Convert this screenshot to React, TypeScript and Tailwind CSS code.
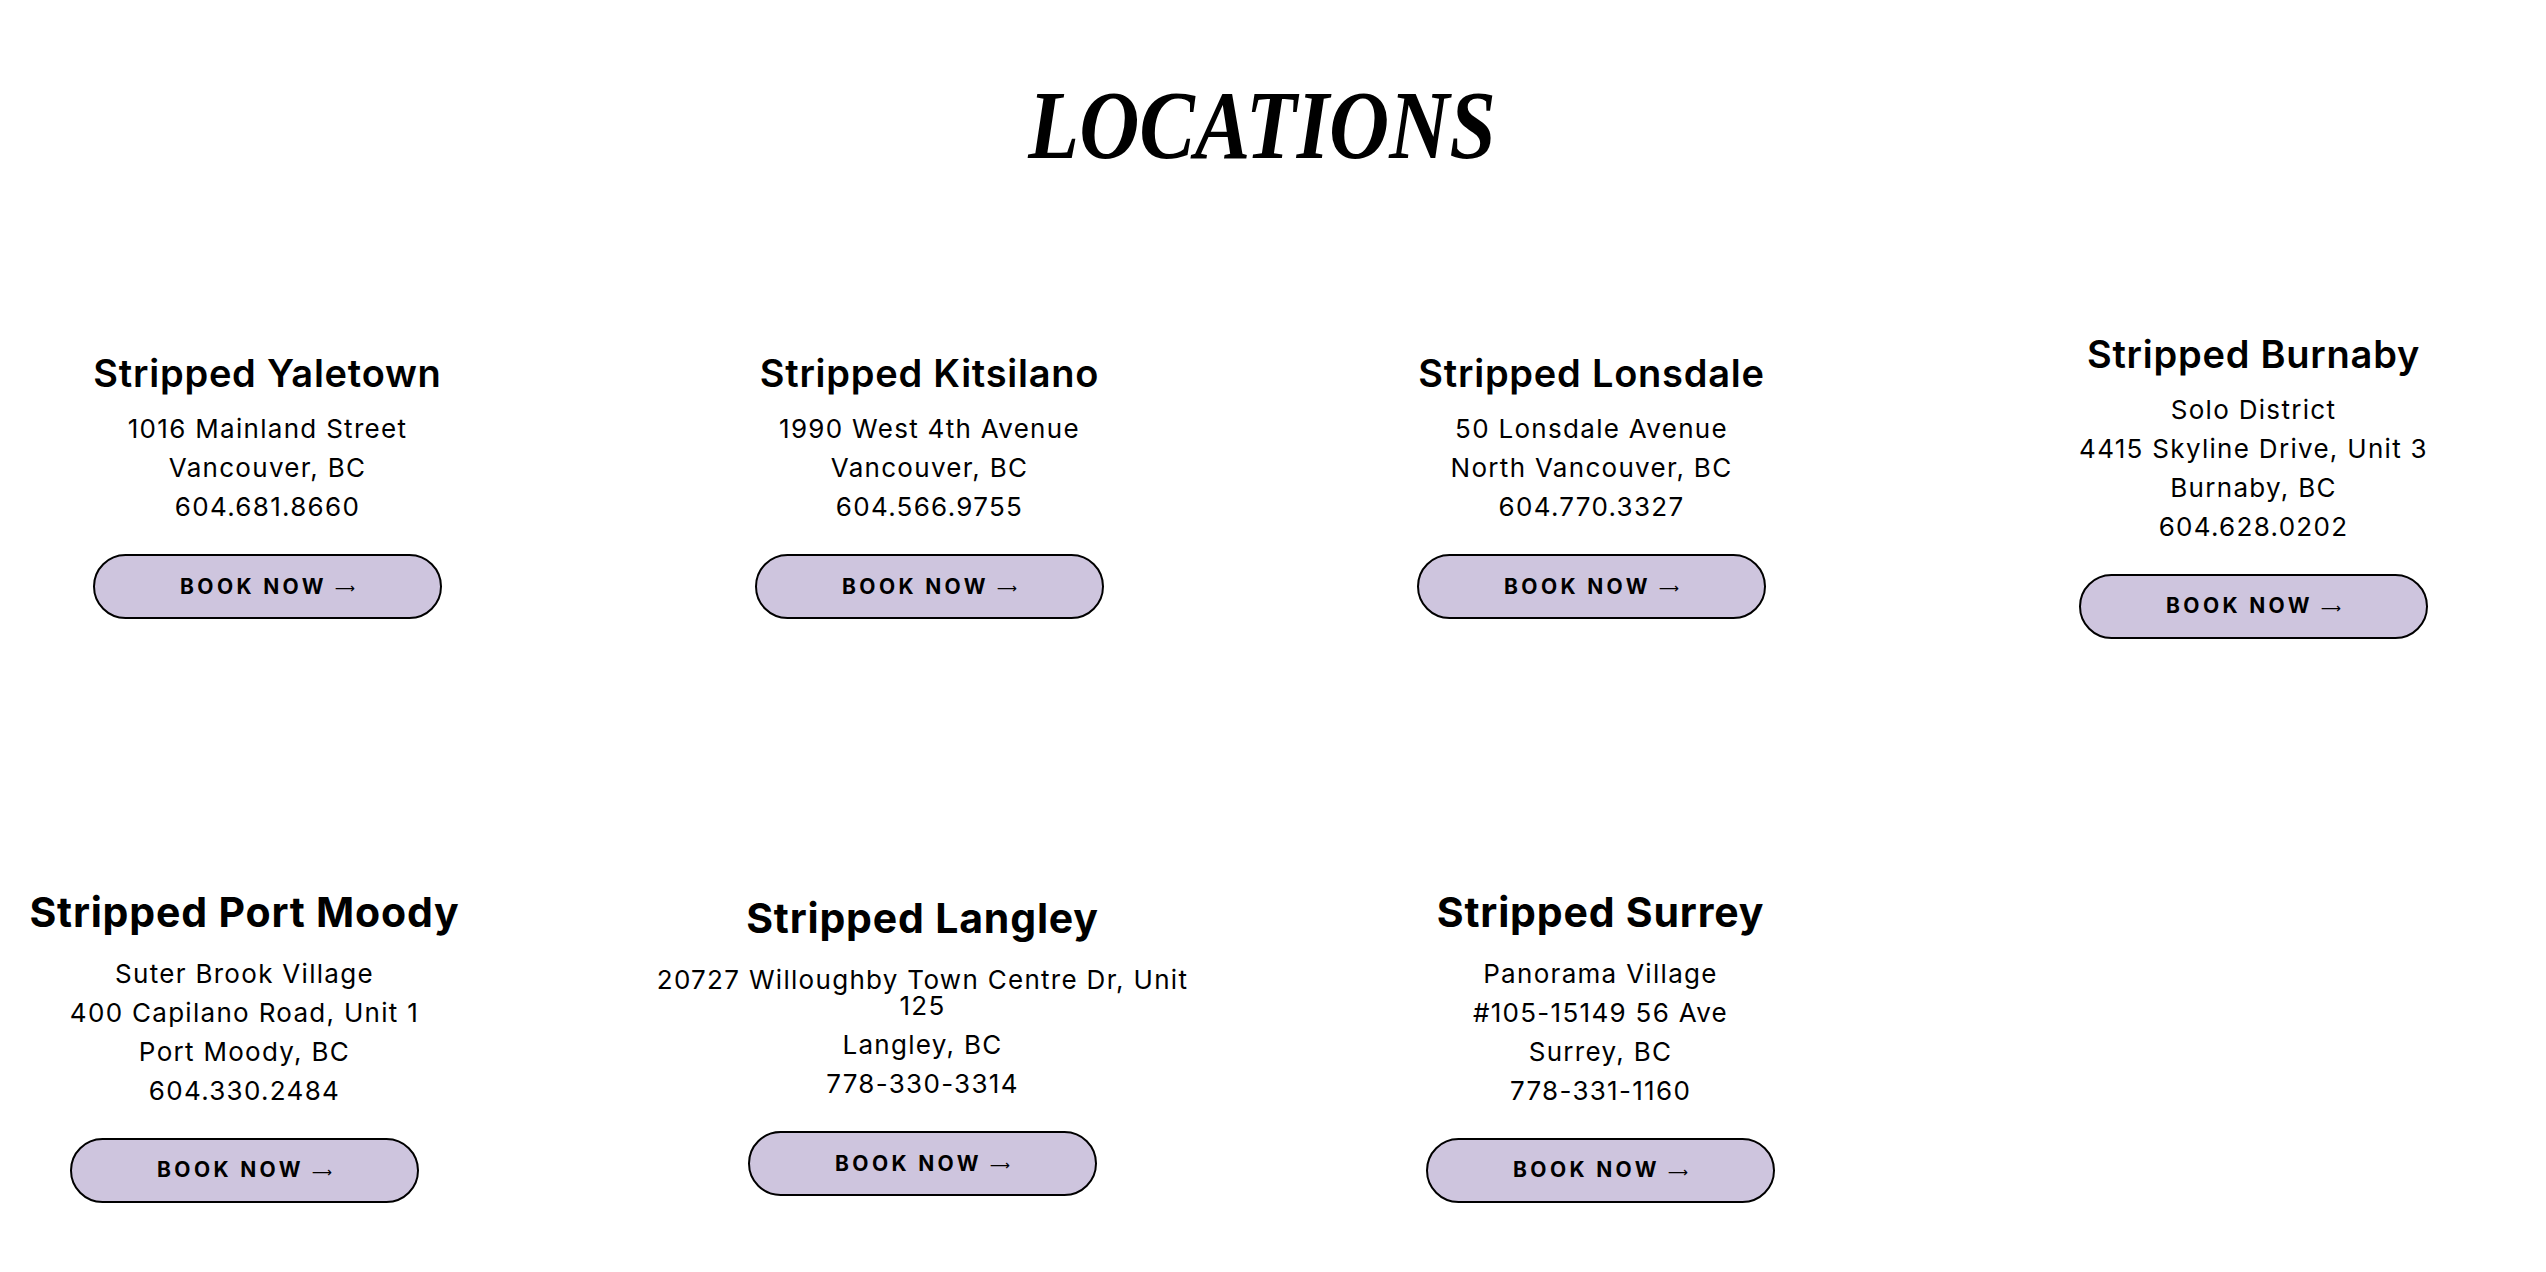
import { ReactNode } from 'react';

type Location = {
  name: string;
  lines: string[];
};

const topRow: Location[] = [
  { name: 'Stripped Yaletown', lines: ['1016 Mainland Street', 'Vancouver, BC', '604.681.8660'] },
  { name: 'Stripped Kitsilano', lines: ['1990 West 4th Avenue', 'Vancouver, BC', '604.566.9755'] },
  { name: 'Stripped Lonsdale', lines: ['50 Lonsdale Avenue', 'North Vancouver, BC', '604.770.3327'] },
  {
    name: 'Stripped Burnaby',
    lines: ['Solo District', '4415 Skyline Drive, Unit 3', 'Burnaby, BC', '604.628.0202'],
  },
];

const bottomRow: Location[] = [
  {
    name: 'Stripped Port Moody',
    lines: ['Suter Brook Village', '400 Capilano Road, Unit 1', 'Port Moody, BC', '604.330.2484'],
  },
  {
    name: 'Stripped Langley',
    lines: ['20727 Willoughby Town Centre Dr, Unit 125', 'Langley, BC', '778-330-3314'],
  },
  {
    name: 'Stripped Surrey',
    lines: ['Panorama Village', '#105-15149 56 Ave', 'Surrey, BC', '778-331-1160'],
  },
];

function BookButton() {
  return (
    <button className="mt-[34px] flex h-[65px] w-[349px] items-center justify-center gap-2 rounded-full border-2 border-black bg-[#cec5de] text-[21px] font-bold uppercase tracking-[0.16em] text-black">
      <span>Book Now</span>
      <span className="mt-1 font-['DejaVu_Sans',sans-serif] text-[14px] font-normal tracking-normal">⟶</span>
    </button>
  );
}

function Card({ loc, wide, children }: { loc: Location; wide?: boolean; children?: ReactNode }) {
  return (
    <div
      className={
        wide
          ? 'flex h-[499px] w-[637px] shrink-0 flex-col items-center justify-center rounded-2xl bg-white px-12 pt-[19px]'
          : 'flex h-[499px] w-[621px] shrink-0 flex-col items-center justify-center rounded-2xl bg-white px-12 pt-[18px]'
      }
    >
      <h3
        className={
          wide
            ? 'text-center text-[41px] font-bold leading-[48px] tracking-[0.02em]'
            : 'text-center text-[38px] font-semibold leading-[46px] tracking-[0.02em]'
        }
      >
        {loc.name}
      </h3>
      <div
        className={
          wide
            ? 'mt-[25px] flex max-w-[540px] flex-col gap-[13px] text-center text-[26px] leading-[26px] tracking-[0.05em]'
            : 'mt-5 flex max-w-[540px] flex-col gap-[13px] text-center text-[26px] leading-[26px] tracking-[0.05em]'
        }
      >
        {loc.lines.map((line) => (
          <p key={line}>{line}</p>
        ))}
      </div>
      {children}
      <BookButton />
    </div>
  );
}

export default function App() {
  return (
    <div className="h-screen overflow-hidden bg-white font-['Inter',sans-serif] text-black">
      <h2 className="pt-[76px] pr-[22px] text-center font-['Liberation_Serif',serif] text-[98px] font-bold italic leading-none">
        <span className="inline-block scale-x-[0.85]">LOCATIONS</span>
      </h2>

      <div className="mt-[52px] flex flex-col gap-[61px]">
        <div className="-ml-[43px] flex gap-[41px]">
          {topRow.map((loc) => (
            <Card key={loc.name} loc={loc} />
          ))}
        </div>
        <div className="-ml-[74px] flex gap-[41px]">
          {bottomRow.map((loc) => (
            <Card key={loc.name} loc={loc} wide />
          ))}
        </div>
      </div>
    </div>
  );
}
